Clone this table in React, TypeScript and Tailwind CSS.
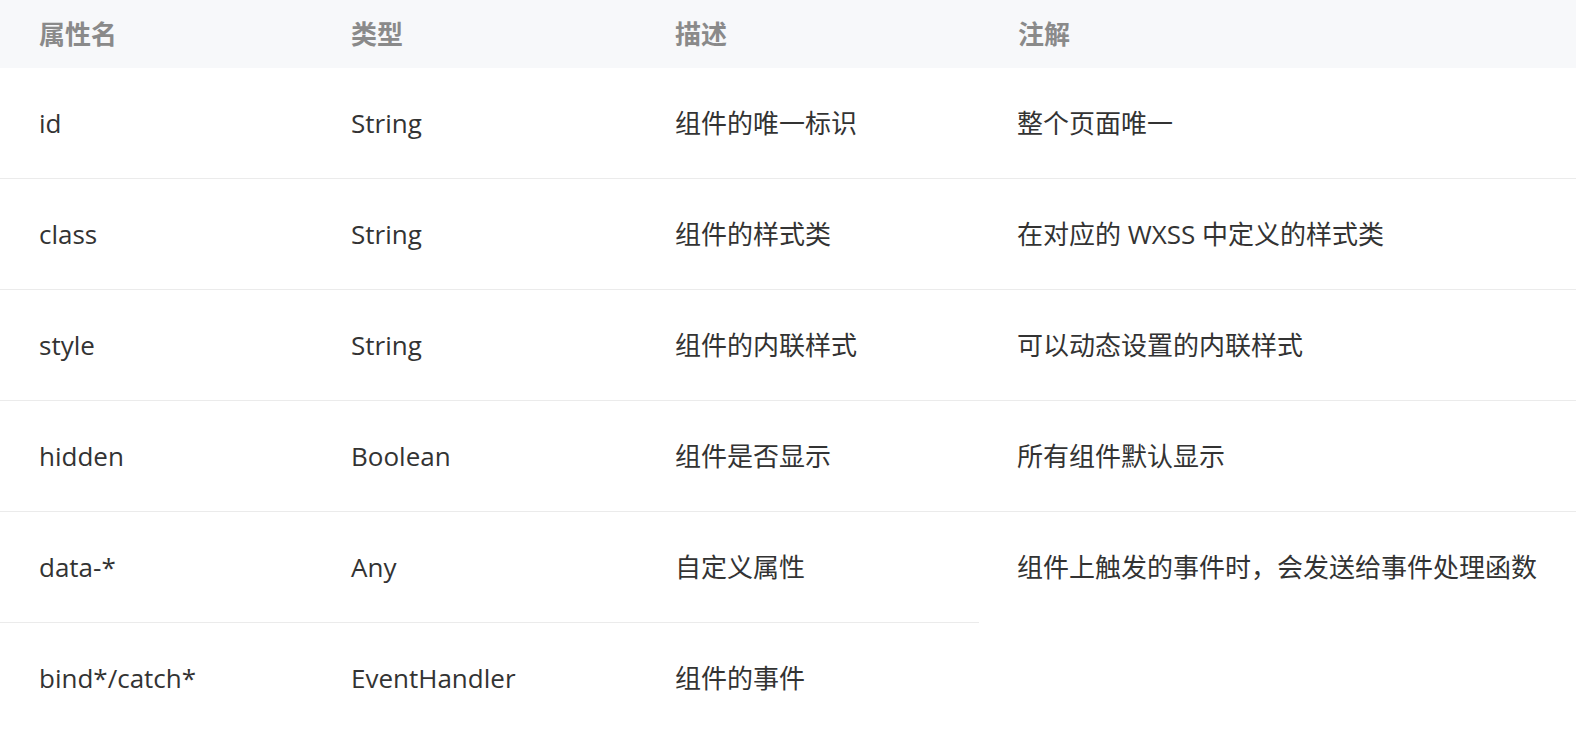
const font = { fontFamily: '"Open Sans", "Noto Sans CJK SC", sans-serif' }

interface Row {
  name: string
  type: string
  desc: string
  note?: string
  noNoteBorder?: boolean
}

const rows: Row[] = [
  { name: 'id', type: 'String', desc: '组件的唯一标识', note: '整个页面唯一' },
  { name: 'class', type: 'String', desc: '组件的样式类', note: '在对应的 WXSS 中定义的样式类' },
  { name: 'style', type: 'String', desc: '组件的内联样式', note: '可以动态设置的内联样式' },
  { name: 'hidden', type: 'Boolean', desc: '组件是否显示', note: '所有组件默认显示' },
  { name: 'data-*', type: 'Any', desc: '自定义属性', note: '组件上触发的事件时，会发送给事件处理函数', noNoteBorder: true },
  { name: 'bind*/catch*', type: 'EventHandler', desc: '组件的事件' },
]

const widths = ['w-[312px]', 'w-[324px]', 'w-[343px]', 'flex-1']

export default function App() {
  return (
    <div className="w-[1576px] h-[731px] overflow-hidden bg-white text-[26px]" style={font}>
      {/* header */}
      <div className="flex h-[68px] bg-[#f7f8fa] text-[#8a8a8a] font-bold">
        {['属性名', '类型', '描述', '注解'].map((h, i) => (
          <div key={h} className={`${widths[i]} flex items-center pl-[39px]`}>
            {h}
          </div>
        ))}
      </div>

      {rows.map((row) => {
        const cells = [row.name, row.type, row.desc]
        return (
          <div key={row.name} className="flex h-[111px] text-[#333]">
            {cells.map((c, i) => (
              <div
                key={i}
                className={`${widths[i]} flex items-center pl-[39px] border-b border-[#ebebeb]`}
              >
                {c}
              </div>
            ))}
            {row.note !== undefined && (
              <div
                className={`flex-1 flex items-center pl-[38px] ${
                  row.noNoteBorder ? '' : 'border-b border-[#ebebeb]'
                }`}
              >
                {row.note}
              </div>
            )}
          </div>
        )
      })}
    </div>
  )
}
